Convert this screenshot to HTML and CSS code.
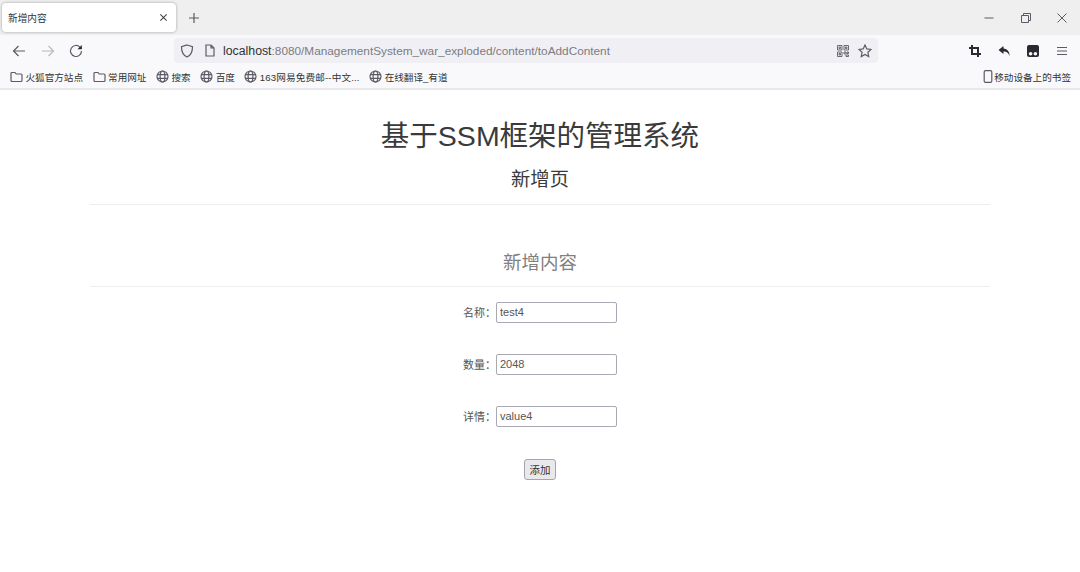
FILE: index.html
```html
<!DOCTYPE html>
<html lang="zh-CN">
<head>
<meta charset="utf-8">
<title>新增内容</title>
<link rel="stylesheet" href="styles.css">
</head>
<body>
<header class="browser">
  <div class="tabbar">
    <div class="tab">
      <span class="tab-title">新增内容</span>
      <svg class="tab-close" width="9" height="9" viewBox="0 0 10 10"><path d="M1.500 1.500l7 7M8.500 1.500l-7 7"/></svg>
    </div>
    <svg class="new-tab" width="12" height="12" viewBox="0 0 12 12"><path d="M6 1v10M1 6h10"/></svg>
    <div class="win-controls">
      <svg width="12" height="12" viewBox="0 0 12 12"><path d="M1.500 6h9"/></svg>
      <svg width="12" height="12" viewBox="0 0 12 12"><path d="M1.500 3.500h7v7h-7zM3.500 3.500v-2h7v7h-2"/></svg>
      <svg width="12" height="12" viewBox="0 0 12 12"><path d="M1.500 1.500l9 9M10.500 1.500l-9 9"/></svg>
    </div>
  </div>
  <div class="toolbar">
    <div class="nav">
      <svg width="14" height="14" viewBox="0 0 14 14"><path d="M13 7H1.500M6.500 2l-5 5 5 5"/></svg>
      <svg class="dim" width="14" height="14" viewBox="0 0 14 14"><path d="M1 7h11.500M7.500 2l5 5-5 5"/></svg>
      <svg width="14" height="14" viewBox="0 0 14 14"><path d="M12.500 7a5.500 5.500 0 1 1-1.600-3.900L12.500 4.700"/><path class="solid" d="M12.800 1v4.300H8.500z"/></svg>
    </div>
    <div class="urlbar">
      <svg class="shield" width="14" height="14" viewBox="0 0 14 14"><path d="M7 1l5.500 1.700c0 5-1.500 8.500-5.500 10.300C3 11.200 1.500 7.700 1.500 2.700z"/></svg>
      <svg class="page-icon" width="12" height="13" viewBox="0 0 12 13"><path d="M2 1h5l3 3v8H2zM7 1v3h3"/></svg>
      <div class="url"><span class="host">localhost</span>:8080/ManagementSystem_war_exploded/content/toAddContent</div>
      <svg class="qr" width="12" height="12" viewBox="0 0 12 12"><path d="M.5.500h4.500v4.500H.5zM7 .5h4.500v4.500H7zM.5 7h4.500v4.500H.5zM2 2h1.500v1.500H2zM8.500 2H10v1.500H8.500zM2 8.500h1.500V10H2zM7 7h2v2H7zM10 7h1.500v1.500H10zM9 10h2.500v1.500H9z"/></svg>
      <svg class="star" width="14" height="14" viewBox="0 0 14 14"><path d="M7 1l1.800 3.900 4.200.5-3.100 2.900.8 4.200L7 10.400l-3.700 2.100.8-4.200L1 5.400l4.200-.5z"/></svg>
    </div>
    <div class="tools">
      <svg class="crop" width="12" height="12" viewBox="0 0 12 12"><path d="M3 0v9h9M0 3h9v9"/></svg>
      <svg width="13" height="12" viewBox="0 0 13 12"><path class="solid" d="M5.500 1L.5 5l5 4V6.500c3 0 4.700 1 6 4.500 0-4.500-2-7-6-7.500z"/></svg>
      <svg class="tablet" width="12" height="12" viewBox="0 0 12 12"><path class="solid" d="M2 0h8a2 2 0 0 1 2 2v8a2 2 0 0 1-2 2H2a2 2 0 0 1-2-2V2a2 2 0 0 1 2-2z"/><circle class="hole" cx="3.600" cy="8.700" r="1.800"/><circle class="hole" cx="8.400" cy="8.700" r="1.800"/></svg>
      <svg class="menu" width="12" height="12" viewBox="0 0 12 12"><path d="M1 2.500h10M1 6h10M1 9.500h10"/></svg>
    </div>
  </div>
  <nav class="bookmarks">
    <div class="bm"><svg class="ic" width="13" height="12" viewBox="0 0 13 12"><use href="#folder"/></svg>火狐官方站点</div>
    <div class="bm"><svg class="ic" width="13" height="12" viewBox="0 0 13 12"><use href="#folder"/></svg>常用网址</div>
    <div class="bm"><svg class="ic" width="13" height="13" viewBox="0 0 13 13"><use href="#globe"/></svg>搜索</div>
    <div class="bm"><svg class="ic" width="13" height="13" viewBox="0 0 13 13"><use href="#globe"/></svg>百度</div>
    <div class="bm"><svg class="ic" width="13" height="13" viewBox="0 0 13 13"><use href="#globe"/></svg><span class="clip">163网易免费邮--中文...</span></div>
    <div class="bm"><svg class="ic" width="13" height="13" viewBox="0 0 13 13"><use href="#globe"/></svg>在线翻译_有道</div>
    <div class="bm mobile"><svg class="ic" width="10" height="13" viewBox="0 0 9 13"><rect x=".7" y=".7" width="7.600" height="11.600" rx="1.300"/></svg>移动设备上的书签</div>
  </nav>
  <svg class="defs" width="0" height="0">
    <symbol id="folder" viewBox="0 0 13 12"><path d="M1 2.500a1 1 0 0 1 1-1h3l1.200 1.500H11a1 1 0 0 1 1 1v5.500a1 1 0 0 1-1 1H2a1 1 0 0 1-1-1z"/></symbol>
    <symbol id="globe" viewBox="0 0 13 13"><circle cx="6.500" cy="6.500" r="5.500"/><ellipse cx="6.500" cy="6.500" rx="2.400" ry="5.500"/><path d="M1 4.700h11M1 8.300h11"/></symbol>
  </svg>
</header>
<main class="page">
  <div class="page-header">
    <h1>基于SSM框架的管理系统</h1>
    <h2>新增页</h2>
  </div>
  <h3 class="form-title">新增内容</h3>
  <form class="form">
    <div class="row"><label>名称：</label><input class="field" type="text" value="test4"></div>
    <div class="row"><label>数量：</label><input class="field" type="text" value="2048"></div>
    <div class="row"><label>详情：</label><input class="field" type="text" value="value4"></div>
    <div class="row row-submit"><button class="submit" type="button">添加</button></div>
  </form>
</main>
</body>
</html>
```
FILE: styles.css
```css
* { box-sizing: border-box; }
html, body { margin: 0; height: 572px; overflow: hidden; }
body { background: #fff; font-family: "Liberation Sans", "Noto Sans CJK SC", sans-serif; color: #333; }
svg { display: block; flex: none; fill: none; stroke: #5b5b66; stroke-width: 1.2; }
svg .solid { fill: #2b2a33; stroke: none; }
svg .hole { fill: #f9f9fb; stroke: none; }
.defs { position: absolute; }

.browser { height: 90px; background: #f9f9fb; border-bottom: 2px solid #e8e8ea; }
.tabbar { height: 35px; background: #efeff0; display: flex; align-items: center; padding: 3px 0 0 2px; }
.tab { width: 174px; height: 29px; margin-top: -3px; background: #fff; border-radius: 4px; box-shadow: 0 0 3px rgba(0,0,0,.35); display: flex; align-items: center; justify-content: space-between; padding: 0 8px 0 6px; }
.tab-title { font-size: 9.700px; color: #333; }
.tab-close path { stroke: #444; }
.new-tab { margin: -2px 0 0 12px; }
.win-controls { margin-left: auto; display: flex; gap: 24.500px; padding-right: 12px; margin-top: -3px; }
.win-controls svg { stroke-width: 1; }

.toolbar { height: 31px; display: flex; align-items: center; }
.nav { width: 174px; display: flex; gap: 14.500px; padding-left: 12px; }
.nav .dim { opacity: .4; }
.urlbar { width: 704px; height: 25px; background: #f0f0f4; border-radius: 4px; display: flex; align-items: center; padding: 0 6px; }
.page-icon { margin-left: 10px; }
.url { margin-left: 7px; flex: 1; font-size: 11.800px; color: #7b7b83; white-space: nowrap; }
.host { font-size: 12.300px; color: #333; }
.qr { stroke-width: .9; }
.star { margin-left: 9px; }
.tools { flex: 1; display: flex; gap: 16.500px; padding-left: 91px; align-items: center; }
.crop path { stroke: #2b2a33; stroke-width: 2; }

.bookmarks { height: 22px; display: flex; align-items: center; padding: 0 9px 1px 10px; gap: 9.500px; font-size: 9.600px; color: #333; white-space: nowrap; }
.bm { display: flex; align-items: center; gap: 2.500px; }
.mobile { margin-left: auto; gap: 1px; }
.clip { letter-spacing: .15px; }

.page { width: 900px; margin: 0 auto; text-align: center; }
.page-header { border-bottom: 1px solid #eee; height: 115px; padding-top: 29px; }
h1 { margin: 0; font-size: 28.500px; font-weight: 400; line-height: 34px; color: #3a3a3a; }
h2 { margin: 15px 0 0; font-size: 19.300px; font-weight: 400; line-height: 24px; color: #3a3a3a; }
.form-title { margin: 45px 0 0; height: 37px; padding-top: 1px; border-bottom: 1px solid #eee; font-size: 18.500px; font-weight: 400; line-height: 24px; color: #808080; }
.form { padding-top: 15px; display: flex; flex-direction: column; gap: 32px; }
.row { height: 20px; display: flex; justify-content: center; align-items: center; }
.row-submit { margin-top: 1px; }
label { font-size: 11px; color: #555; width: 33px; text-align: left; }
.field { width: 121px; height: 21px; padding: 0 3px; border: 1px solid #a9a9b4; border-radius: 2px; font: 11px "Liberation Sans", sans-serif; color: #555; background: #fff; }
.submit { width: 32px; height: 21px; padding: 0; border: 1px solid #a5a5ae; border-radius: 3px; background: #e9e9ed; font: 10.500px "Liberation Sans", "Noto Sans CJK SC", sans-serif; color: #333; }
```
